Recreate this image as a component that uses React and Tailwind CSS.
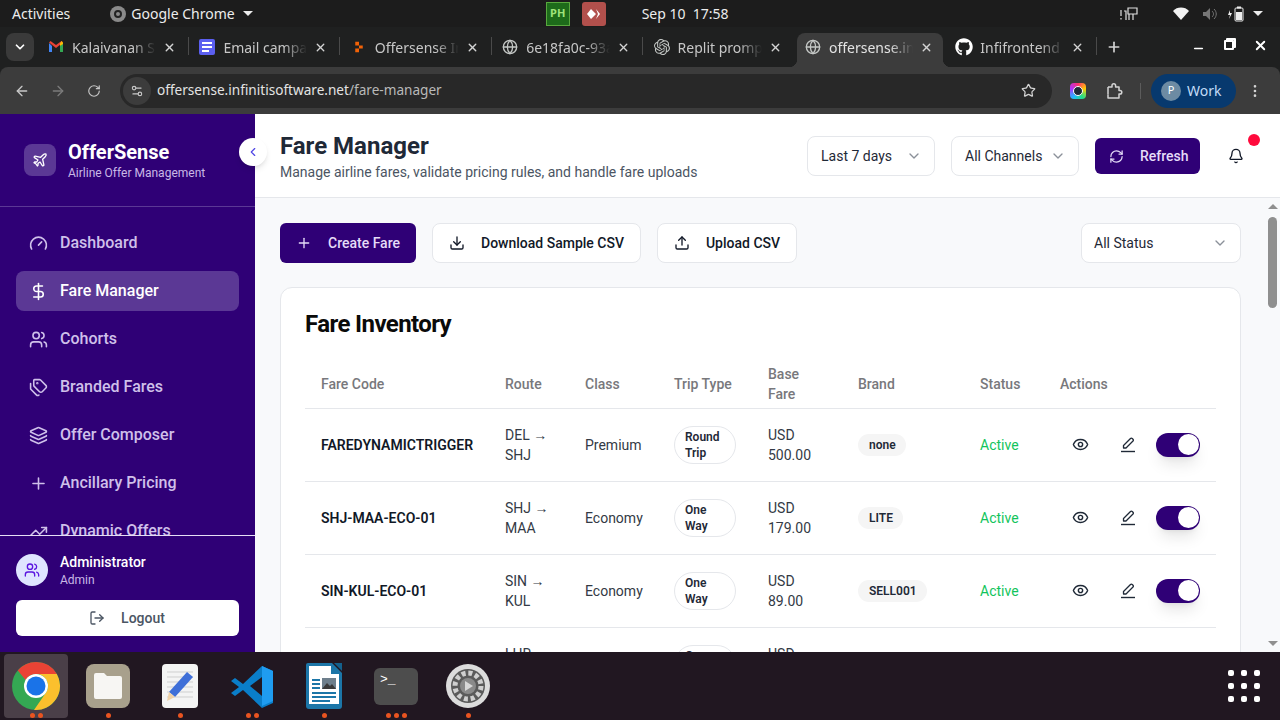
import {
  ArrowLeft, ArrowRight, Bell, ChevronDown, ChevronLeft, Download, Eye, Gauge, DollarSign, Globe, Layers,
  LogOut, Minus, MoreVertical, Plane, Plus, RefreshCw, RotateCw, Settings2, Star, Tags,
  TrendingUp, Upload, Users, X,
} from 'lucide-react'
import { FaGithub } from 'react-icons/fa'
import { SiOpenai } from 'react-icons/si'

const navItems = [
  { label: 'Dashboard', icon: Gauge },
  { label: 'Fare Manager', icon: DollarSign, active: true },
  { label: 'Cohorts', icon: Users },
  { label: 'Branded Fares', icon: Tags },
  { label: 'Offer Composer', icon: Layers },
  { label: 'Ancillary Pricing', icon: Plus },
  { label: 'Dynamic Offers', icon: TrendingUp },
]

const fares = [
  { code: 'FAREDYNAMICTRIGGER', from: 'DEL', to: 'SHJ', cls: 'Premium', trip: ['Round', 'Trip'], amount: '500.00', brand: 'none' },
  { code: 'SHJ-MAA-ECO-01', from: 'SHJ', to: 'MAA', cls: 'Economy', trip: ['One', 'Way'], amount: '179.00', brand: 'LITE' },
  { code: 'SIN-KUL-ECO-01', from: 'SIN', to: 'KUL', cls: 'Economy', trip: ['One', 'Way'], amount: '89.00', brand: 'SELL001' },
  { code: 'LHR-DXB-ECO-01', from: 'LHR', to: 'DXB', cls: 'Economy', trip: ['One', 'Way'], amount: '320.00', brand: 'LITE' },
]

function GmailIcon() {
  return (
    <svg width="16" height="16" viewBox="0 0 16 16">
      <path d="M1 4v9h3V7z" fill="#4285f4" />
      <path d="M12 7v6h3V4z" fill="#34a853" />
      <path d="M1 3.500 8 9l7-5.500L13.500 2 8 6 2.500 2z" fill="#ea4335" />
      <path d="M12 4.500 13.500 2 15 3.500V5l-3 2z" fill="#fbbc04" />
    </svg>
  )
}

function DocsIcon() {
  return (
    <div className="w-4 h-4 rounded-[2px] bg-[#5b5ff0] flex flex-col justify-center gap-[2px] px-[3px]">
      <span className="h-[2px] w-full bg-white" />
      <span className="h-[2px] w-full bg-white" />
      <span className="h-[2px] w-[7px] bg-white" />
    </div>
  )
}

function ReplitIcon() {
  return (
    <svg width="16" height="16" viewBox="0 0 16 16">
      <path d="M3 1h5v5H3zM8 6h5v4H8zM3 10h5v5H3z" fill="#f26207" transform="translate(2 2) scale(.75)" />
    </svg>
  )
}

function PencilLineIcon() {
  return (
    <svg width="16" height="16" viewBox="0 0 16 16" fill="none" stroke="#1f2937" strokeWidth="1.300" strokeLinejoin="round">
      <path d="M10.500 1.500a1.200 1.200 0 0 1 1.700 0l.8.8a1.200 1.200 0 0 1 0 1.700L6 11H3.500V8.500z" />
      <path d="M1 14.500h14" strokeWidth="1.400" />
    </svg>
  )
}

function ExtensionIcon() {
  return (
    <svg width="18" height="18" viewBox="0 0 18 18" fill="none" stroke="#d4d4d4" strokeWidth="1.500" strokeLinejoin="round">
      <path d="M2 5h4V3.500a1.800 1.800 0 0 1 3.600 0V5H13v3.500h1a1.800 1.800 0 0 1 0 3.600h-1V16H2v-3.500" />
      <path d="M2 5v7.500" />
    </svg>
  )
}

function ChromeIcon({ size = 48 }) {
  return (
    <svg width={size} height={size} viewBox="0 0 48 48">
      <circle cx="24" cy="24" r="24" fill="#34a853" />
      <path d="M24 0a24 24 0 0 1 20.800 12H24a12 12 0 0 0-10.400 6L5.800 8.500A24 24 0 0 1 24 0z" fill="#ea4335" />
      <path d="M44.800 12A24 24 0 0 1 22 47.900L34.400 30A12 12 0 0 0 24 12z" fill="#fbc02d" />
      <circle cx="24" cy="24" r="12" fill="#fff" />
      <circle cx="24" cy="24" r="9.500" fill="#1a73e8" />
    </svg>
  )
}

function FilesIcon() {
  return (
    <div className="w-11 h-11 rounded-lg bg-[#a8a08c] flex items-center justify-center">
      <svg width="32" height="28" viewBox="0 0 32 28">
        <path d="M2 3a2 2 0 0 1 2-2h8l3 3h13a2 2 0 0 1 2 2v19a2 2 0 0 1-2 2H4a2 2 0 0 1-2-2z" fill="#f7f6f3" />
      </svg>
    </div>
  )
}

function EditorIcon() {
  return (
    <svg width="38" height="46" viewBox="0 0 38 46">
      <rect x="1" y="1" width="36" height="44" rx="4" fill="#f4f4f4" />
      <path d="M6 9h26M6 14h26M6 19h26M6 24h26M6 29h26M6 34h26" stroke="#cfcfcf" />
      <path d="m26 9 6 5-18 20-6-5z" fill="#3f6fd8" />
      <path d="m8 29 6 5-8 4z" fill="#f0d2a8" />
    </svg>
  )
}

function CodeIcon() {
  return (
    <svg width="44" height="44" viewBox="0 0 44 44">
      <path d="M32 2 13 20 5 14l-4 3 8 6-8 6 4 3 8-6 19 18 11-5V7z" fill="#0a7ec9" />
      <path d="M32 2v40l11-5V7z" fill="#1f9cf0" />
      <path d="M32 13 20 22l12 10z" fill="#211721" />
    </svg>
  )
}

function WriterIcon() {
  return (
    <svg width="38" height="48" viewBox="0 0 38 48">
      <path d="M3 1h24l10 10v33a3 3 0 0 1-3 3H4a3 3 0 0 1-3-3V3a2 2 0 0 1 2-2z" fill="#1c76a8" />
      <path d="M4 4h22v8h8v30H4z" fill="#fff" />
      <path d="M29 1l8 8V1z" fill="#14608c" />
      <path d="M7 18h8M7 22h8M7 26h8M7 31h24M7 35h24M7 39h18" stroke="#1c76a8" strokeWidth="2" />
      <rect x="17" y="16" width="14" height="11" fill="#6e7f8c" />
      <path d="m17 27 5-6 3 3 2-2 4 5z" fill="#3a3a3a" />
    </svg>
  )
}

function TerminalIcon() {
  return (
    <div className="w-11 h-[37px] rounded-md bg-[#4d4d4d] font-['Liberation_Mono',monospace] text-white text-[13px] leading-[14px] pl-[6px] pt-[5px]">
      &gt;_
    </div>
  )
}

function GearIcon() {
  return (
    <svg width="46" height="46" viewBox="0 0 46 46">
      <circle cx="23" cy="23" r="22" fill="#dcdcdc" />
      <circle cx="23" cy="23" r="17" fill="#5a5a5a" />
      <circle cx="23" cy="23" r="13" fill="none" stroke="#cfcfcf" strokeWidth="5" strokeDasharray="4 2.800" />
      <circle cx="23" cy="23" r="8" fill="#8a8a8a" />
      <path d="m20 18 8 5-8 5z" fill="#d8d8d8" />
    </svg>
  )
}

const dockApps = [
  { key: 'chrome', el: <ChromeIcon />, dots: 2, active: true },
  { key: 'files', el: <FilesIcon />, dots: 1 },
  { key: 'editor', el: <EditorIcon />, dots: 1 },
  { key: 'code', el: <CodeIcon />, dots: 2 },
  { key: 'writer', el: <WriterIcon />, dots: 1 },
  { key: 'terminal', el: <TerminalIcon />, dots: 3 },
  { key: 'settings', el: <GearIcon />, dots: 1 },
]

const tabs = [
  { title: 'Kalaivanan S', icon: <GmailIcon /> },
  { title: 'Email campaign', icon: <DocsIcon /> },
  { title: 'Offersense Infiniti', icon: <ReplitIcon /> },
  { title: '6e18fa0c-93ab', icon: <Globe size={16} className="text-[#c4c7c5]" /> },
  { title: 'Replit prompts', icon: <SiOpenai size={16} className="text-[#c4c7c5]" /> },
  { title: 'offersense.infiniti', icon: <Globe size={16} className="text-[#c4c7c5]" />, active: true },
  { title: 'Infifrontend', icon: <FaGithub size={18} className="text-white" /> },
]

function GnomeBar() {
  return (
    <div className="h-[27px] bg-[#1c1c1c] text-[#ececec] text-[14px] flex items-center font-['Noto_Sans',sans-serif] shrink-0">
      <span className="ml-3">Activities</span>
      <span className="ml-[40px] flex items-center gap-[5px]">
        <span className="w-4 h-4 rounded-full bg-[#8a8a8a] flex items-center justify-center">
          <span className="w-2 h-2 rounded-full border-2 border-[#222]" />
        </span>
        Google Chrome
        <span className="ml-[3px] w-0 h-0 border-x-[5px] border-x-transparent border-t-[5px] border-t-[#ececec]" />
      </span>
      <span className="ml-[293px] w-6 h-6 bg-[#1d6b1a] border border-[#58a83e] text-[#9fe37a] text-[11px] font-bold flex items-center justify-center">PH</span>
      <span className="ml-3 w-6 h-6 rounded-[3px] bg-[#b2504c] text-white text-[10px] flex items-center justify-center">
        <svg width="16" height="12" viewBox="0 0 16 12">
          <path d="m5 1 5 5-5 5-4-5zM10 1l4 5-4 5 2-5z" fill="#fff" />
        </svg>
      </span>
      <span className="ml-9">Sep 10&nbsp;&nbsp;17:58</span>
      <div className="ml-auto mr-[17px] flex items-center text-[#e0e0e0]">
        <svg width="18" height="16" viewBox="0 0 18 16" fill="none" stroke="#e0e0e0" strokeWidth="1.200" className="mr-[35px]">
          <path d="M1 4v6M1 12v1.500" />
          <path d="M4 5h2v9M8 2h9v6H8zM9 8v6M13 8v6" />
        </svg>
        <svg width="16" height="14" viewBox="0 0 16 14" className="mr-[13px]">
          <path d="M8 13 0 4a11 11 0 0 1 16 0z" fill="#f2f2f2" />
        </svg>
        <svg width="16" height="14" viewBox="0 0 16 14" className="mr-[9px]">
          <path d="M1 5h3l4-4v12l-4-4H1z" fill="#777" />
          <path d="M10 4c2 2 2 4 0 6M12 2c3 3 3 7 0 10" stroke="#777" fill="none" />
        </svg>
        <svg width="18" height="16" viewBox="0 0 18 16" className="mr-[8px]">
          <path d="M3 4 1 9h2l-1 4 3-6H3z" fill="#eee" />
          <rect x="8" y="2" width="8" height="13" rx="1" fill="none" stroke="#eee" />
          <rect x="10" y="0.500" width="4" height="2" fill="#eee" />
          <rect x="9" y="6" width="6" height="8" fill="#eee" />
        </svg>
        <span className="w-0 h-0 border-x-[5px] border-x-transparent border-t-[5px] border-t-[#ececec]" />
      </div>
    </div>
  )
}

function TabStrip() {
  return (
    <div className="h-10 bg-[#1f2020] flex items-stretch text-[#c7c7c7] text-[14px] font-['Noto_Sans',sans-serif] shrink-0">
      <div className="w-7 h-7 mt-[6px] ml-[6px] rounded-lg bg-[#3a3a3a] flex items-center justify-center shrink-0">
        <ChevronDown size={14} strokeWidth={3} className="text-white" />
      </div>
      <div className="flex items-stretch ml-[6px] gap-[5.400px]">
        {tabs.map((t, i) => (
          <div
            key={t.title}
            className={`relative w-[146px] flex items-center gap-[7px] pl-[7px] pr-[10px] pb-[6px] mt-[6px] rounded-t-lg ${t.active ? 'bg-[#3c3c3c] text-[#e3e3e3]' : ''}`}
          >
            <span className="w-[18px] flex justify-center shrink-0">{t.icon}</span>
            <span className="flex-1 overflow-hidden whitespace-nowrap [mask-image:linear-gradient(to_right,black_72%,transparent)]">{t.title}</span>
            <X size={13} strokeWidth={2.500} className="shrink-0 text-[#d4d4d4]" />
            {t.active && (
              <>
                <span className="absolute bottom-0 left-[-8px] w-2 h-2 bg-[radial-gradient(circle_at_0_0,transparent_8px,#3c3c3c_8.500px)]" />
                <span className="absolute bottom-0 right-[-8px] w-2 h-2 bg-[radial-gradient(circle_at_100%_0,transparent_8px,#3c3c3c_8.500px)]" />
              </>
            )}
            {i < 4 && <span className="absolute right-[-3px] top-[4px] w-px h-[18px] bg-[#4a4a4a]" />}
          </div>
        ))}
      </div>
      <span className="ml-[2px] mt-[10px] w-px h-[18px] bg-[#4a4a4a]" />
      <Plus size={16} strokeWidth={2.500} className="ml-[9px] mt-[12px] text-[#d4d4d4]" />
      <div className="ml-auto flex items-center gap-[19px] pr-[12px] mt-[2px] pb-[6px] text-white">
        <Minus size={13} strokeWidth={3} className="translate-y-[3px]" />
        <span className="w-[10px] h-[10px] border-2 border-white rounded-[1px] shadow-[2px_-2px_0_0_#fff]" />
        <X size={15} strokeWidth={3} />
      </div>
    </div>
  )
}

function Toolbar() {
  return (
    <div className="h-[47px] bg-[#3c3c3c] flex items-center text-[#c7c7c7] shrink-0 rounded-t-lg font-['Noto_Sans',sans-serif]">
      <ArrowLeft size={16} className="ml-[14px]" />
      <ArrowRight size={16} className="ml-[20px] text-[#7b7b7b]" />
      <RotateCw size={14} className="ml-[21px]" />
      <div className="ml-[19px] w-[932px] h-[34px] bg-[#282828] rounded-full flex items-center">
        <span className="ml-[3px] w-7 h-7 rounded-full bg-[#3c3c3c] flex items-center justify-center">
          <Settings2 size={14} />
        </span>
        <span className="ml-[6px] text-[13.600px] text-[#b9b9b9] mb-px">
          <span className="text-[#e3e3e3]">offersense.infinitisoftware.net</span>/fare-manager
        </span>
        <Star size={15} className="ml-auto mr-[16px] text-[#d4d4d4]" />
      </div>
      <span className="ml-[18px] w-4 h-4 rounded-[4px] bg-[conic-gradient(#ff2f6d,#ffcc00,#22dd88,#22bbff,#aa33ff,#ff2f6d)] flex items-center justify-center">
        <span className="w-[10px] h-[10px] rounded-full bg-[#1f2a38] border border-white" />
      </span>
      <span className="ml-[20px]"><ExtensionIcon /></span>
      <span className="ml-[16px] w-px h-4 bg-[#5c5c5c]" />
      <div className="ml-[10px] w-[85px] h-[34px] rounded-full bg-[#07396e] flex items-center gap-[6px] pl-[10px] text-[#c2dcf7] text-[14px]">
        <span className="w-5 h-5 rounded-full bg-[#6d8ba3] text-white text-[11px] flex items-center justify-center">P</span>
        Work
      </div>
      <MoreVertical size={16} className="ml-[11px] text-[#d4d4d4]" />
    </div>
  )
}

function Sidebar() {
  return (
    <aside className="relative w-[255px] shrink-0 bg-[#2f0076] flex flex-col">
      <div className="h-[93px] shrink-0 flex items-start gap-3 pl-6 pt-[30px] border-b border-[#5b3895]">
        <span className="w-8 h-8 rounded-lg bg-[#5b3895] flex items-center justify-center">
          <Plane size={16} className="text-white" />
        </span>
        <div>
          <div className="text-[20px] leading-[16px] font-bold text-white mb-[5px]">OfferSense</div>
          <div className="text-[12px] leading-[16px] text-[#c9b8e6]">Airline Offer Management</div>
        </div>
      </div>
      <nav className="flex-1 overflow-hidden px-4 pt-4 flex flex-col gap-2 min-h-0">
        {navItems.map((item) => {
          const Icon = item.icon
          return (
            <div
              key={item.label}
              className={`h-10 shrink-0 rounded-lg flex items-center gap-[12px] px-[13px] text-[16px] font-medium ${item.active ? 'bg-[#5b3895] text-white' : 'text-[#cfc0ea]'}`}
            >
              <Icon size={19} className="shrink-0" />
              {item.label}
            </div>
          )
        })}
      </nav>
      <div className="h-[117px] shrink-0 border-t border-[#e6def5] px-4 pt-[18px]">
        <div className="flex items-start gap-3 h-[33px]">
          <span className="w-8 h-8 rounded-full bg-[#dfe5ff] flex items-center justify-center">
            <Users size={16} className="text-[#5b16e0]" />
          </span>
          <div>
            <div className="text-[14px] leading-[16px] font-medium text-white">Administrator</div>
            <div className="text-[12px] leading-[16px] mt-[2px] text-[#c9b8e6]">Admin</div>
          </div>
        </div>
        <div className="mt-[13px] h-9 rounded-md bg-white flex items-center justify-center gap-[15px] text-[14px] font-medium text-[#4b5563]">
          <LogOut size={16} className="-translate-x-px" />
          Logout
        </div>
      </div>
      <span className="absolute top-[24px] right-[-12px] w-7 h-7 rounded-full bg-white shadow-md flex items-center justify-center text-[#4f46e5] z-10">
        <ChevronLeft size={14} />
      </span>
    </aside>
  )
}

function SelectBox({ label, className }) {
  return (
    <div className={`h-10 rounded-lg border border-[#e5e7eb] bg-white flex items-center justify-between pr-[12px] text-[14px] text-[#1f2937] ${className}`}>
      {label}
      <ChevronDown size={16} className="text-[#8b9099]" />
    </div>
  )
}

function Header() {
  return (
    <header className="h-[84px] shrink-0 bg-white border-b border-[#e5e7eb] flex items-center pl-[25px]">
      <div className="pt-[3px]">
        <h1 className="text-[24px] leading-[28px] font-bold text-[#1f2937]">Fare Manager</h1>
        <p className="text-[14px] leading-[20px] text-[#4b5563] mt-[2px]">Manage airline fares, validate pricing rules, and handle fare uploads</p>
      </div>
      <div className="ml-auto flex items-center gap-4 pr-[26px]">
        <SelectBox label="Last 7 days" className="w-32 pt-px pl-[13px]" />
        <SelectBox label="All Channels" className="w-32 pt-px pl-[13px]" />
        <div className="w-[105px] h-9 pt-px rounded-md bg-[#2f0076] flex items-center gap-4 pl-[14px] text-[14px] font-medium text-[#e5dcf8]">
          <RefreshCw size={15} />
          Refresh
        </div>
        <div className="relative w-9 h-9 ml-[2px] flex items-center justify-center">
          <Bell size={16} className="text-[#111827]" />
          <span className="absolute top-[-4px] right-[-6px] w-3 h-3 rounded-full bg-[#ff0a3c]" />
        </div>
      </div>
    </header>
  )
}

function ActionButton({ icon: Icon, label, className }) {
  return (
    <div className={`h-10 rounded-lg border border-[#e5e7eb] bg-white flex items-center justify-center gap-4 text-[14px] font-medium text-[#111827] ${className}`}>
      <Icon size={16} />
      {label}
    </div>
  )
}

function FareRow({ fare }) {
  return (
    <tr className="border-b border-[#e5e7eb] h-[73px] text-[14px] leading-[20px] text-[#333a45]">
      <td className="pl-4 font-semibold text-[#111827]">{fare.code}</td>
      <td className="pl-4">
        <div className="whitespace-nowrap">{fare.from} →</div>
        <div>{fare.to}</div>
      </td>
      <td className="pl-4">{fare.cls}</td>
      <td className="pl-4">
        <div className="w-[62px] h-[38px] rounded-full border border-[#e5e7eb] flex flex-col justify-center pl-[10px] text-[12px] leading-[16px] font-semibold text-[#1f2937]">
          <span>{fare.trip[0]}</span>
          <span>{fare.trip[1]}</span>
        </div>
      </td>
      <td className="pl-4">
        USD
        <br />
        {fare.amount}
      </td>
      <td className="pl-4">
        <span className="inline-flex h-[22px] items-center rounded-full bg-[#f5f5f5] pl-[11px] pr-[10px] text-[12px] font-semibold text-[#1f2937]">{fare.brand}</span>
      </td>
      <td className="pl-4 text-[#12c45c]">Active</td>
      <td className="pl-5">
        <div className="flex items-center">
          <span className="w-8 flex justify-center"><Eye size={17} className="text-[#1f2937]" /></span>
          <span className="w-8 ml-4 flex justify-center"><PencilLineIcon /></span>
          <span className="ml-3 w-11 h-6 rounded-full bg-[#2f0076] shadow-lg flex items-center justify-end pr-[1px]">
            <span className="w-[21px] h-[21px] rounded-full bg-white" />
          </span>
        </div>
      </td>
    </tr>
  )
}

function FareTable() {
  return (
    <table className="w-[911px] table-fixed border-collapse mt-[20px]">
      <colgroup>
        <col className="w-[184px]" />
        <col className="w-[80px]" />
        <col className="w-[89px]" />
        <col className="w-[94px]" />
        <col className="w-[90px]" />
        <col className="w-[122px]" />
        <col className="w-[80px]" />
        <col className="w-[172px]" />
      </colgroup>
      <thead>
        <tr className="border-b border-[#e5e7eb] text-left text-[14px] leading-[20px] text-[#78787c] h-[52px]">
          <th className="pl-4 pt-[5px] font-medium">Fare Code</th>
          <th className="pl-4 pt-[5px] font-medium">Route</th>
          <th className="pl-4 pt-[5px] font-medium">Class</th>
          <th className="pl-4 pt-[5px] font-medium">Trip Type</th>
          <th className="pl-4 pt-[5px] font-medium">Base<br />Fare</th>
          <th className="pl-4 pt-[5px] font-medium">Brand</th>
          <th className="pl-4 pt-[5px] font-medium">Status</th>
          <th className="pl-4 pt-[5px] font-medium">Actions</th>
        </tr>
      </thead>
      <tbody>
        {fares.map((f) => <FareRow key={f.code} fare={f} />)}
      </tbody>
    </table>
  )
}

function Scrollbar() {
  return (
    <div className="w-[15px] shrink-0 flex flex-col items-center pt-[6px] pb-[6px]">
      <span className="w-0 h-0 border-x-[5px] border-x-transparent border-b-[5px] border-b-[#8f8f8f]" />
      <span className="mt-[8px] w-[9px] h-[91px] rounded-full bg-[#8f8f8f]" />
      <span className="mt-auto w-0 h-0 border-x-[5px] border-x-transparent border-t-[5px] border-t-[#8f8f8f]" />
    </div>
  )
}

function Dock() {
  return (
    <div className="h-[68px] shrink-0 bg-[#211721] flex items-center">
      {dockApps.map((app) => (
        <div key={app.key} className="relative w-[72px] h-full flex items-center justify-center">
          {app.active && <span className="absolute left-1 right-1 top-[2px] bottom-[2px] rounded bg-[#4a3f48]" />}
          <span className="relative">{app.el}</span>
          <span className="absolute bottom-[2px] left-0 right-0 flex justify-center gap-[3px]">
            {Array.from({ length: app.dots }).map((_, i) => (
              <span key={i} className="w-[5px] h-[5px] rounded-full bg-[#e95420]" />
            ))}
          </span>
        </div>
      ))}
      <div className="ml-auto mr-[20px] grid grid-cols-3 gap-[7px]">
        {Array.from({ length: 9 }).map((_, i) => (
          <span key={i} className="w-[6px] h-[6px] rounded-[2px] bg-white" />
        ))}
      </div>
    </div>
  )
}

export default function App() {
  return (
    <div className="w-[1280px] h-[720px] overflow-hidden flex flex-col bg-[#1f2020] font-['Roboto',sans-serif]">
      <GnomeBar />
      <TabStrip />
      <Toolbar />
      <div className="flex-1 min-h-0 flex">
        <Sidebar />
        <main className="flex-1 min-w-0 flex flex-col bg-[#f8f9fb]">
          <Header />
          <div className="flex-1 min-h-0 flex">
            <div className="flex-1 min-w-0 overflow-hidden pl-[25px] pr-[24px] pt-[25px]">
              <div className="flex gap-4">
                <div className="w-[136px] h-10 rounded-md bg-[#2f0076] flex items-center justify-center gap-4 text-[14px] font-medium text-[#e5dcf8]">
                  <Plus size={16} />
                  Create Fare
                </div>
                <ActionButton icon={Download} label="Download Sample CSV" className="w-[209px]" />
                <ActionButton icon={Upload} label="Upload CSV" className="w-[140px]" />
                <SelectBox label="All Status" className="w-40 ml-auto pl-[12px]" />
              </div>
              <section className="mt-6 rounded-xl border border-[#e5e7eb] bg-white p-6">
                <h2 className="text-[24px] leading-[24px] font-bold text-[#0a0a0a] tracking-[-0.600px]">Fare Inventory</h2>
                <FareTable />
              </section>
            </div>
            <Scrollbar />
          </div>
        </main>
      </div>
      <Dock />
    </div>
  )
}
